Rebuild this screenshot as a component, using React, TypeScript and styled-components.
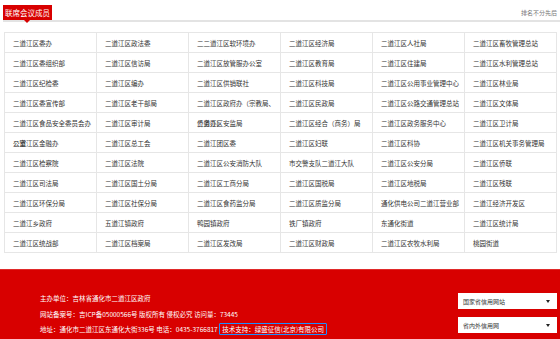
import styled, { createGlobalStyle } from 'styled-components';

const GlobalStyle = createGlobalStyle`
  html, body {
    margin: 0;
    padding: 0;
    background: #fff;
    font-family: "Noto Sans CJK SC", "Noto Sans", sans-serif;
  }
  * { box-sizing: border-box; }
`;

const RED = '#d80000';

const members: string[][] = [
	['二道江区委办', '二道江区政法委', '二二道江区软环境办', '二道江区经济局', '二道江区人社局', '二道江区畜牧管理总站'],
	['二道江区委组织部', '二道江区信访局', '二道江区放管服办公室', '二道江区教育局', '二道江区住建局', '二道江区水利管理总站'],
	['二道江区纪检委', '二道江区编办', '二道江区供销联社', '二道江区科技局', '二道江区公用事业管理中心', '二道江区林业局'],
	['二道江区委宣传部', '二道江区老干部局', '二道江区政府办（宗教局、侨务办）', '二道江区民政局', '二道江区公路交通管理总站', '二道江区文体局'],
	['二道江区食品安全委员会办公室', '二道江区审计局', '二道江区安监局', '二道江区经合（商务）局', '二道江区政务服务中心', '二道江区卫计局'],
	['二道江区金融办', '二道江区总工会', '二道江团区委', '二道江区妇联', '二道江区科协', '二道江区机关事务管理局'],
	['二道江区检察院', '二道江区法院', '二道江区公安消防大队', '市交警支队二道江大队', '二道江区公安分局', '二道江区侨联'],
	['二道江区司法局', '二道江区国土分局', '二道江区工商分局', '二道江区国税局', '二道江区地税局', '二道江区残联'],
	['二道江区环保分局', '二道江区社保分局', '二道江区食药监分局', '二道江区质监分局', '通化供电公司二道江营业部', '二道江经济开发区'],
	['二道江乡政府', '五道江镇政府', '鸭园镇政府', '铁厂镇政府', '东通化街道', '二道江区统计局'],
	['二道江区统战部', '二道江区档案局', '二道江区发改局', '二道江区财政局', '二道江区农牧水利局', '桃园街道'],
];

const Page = styled.div`
  display: flex;
  flex-direction: column;
  min-height: 339px;
`;

const Section = styled.section`
  padding: 5px 0 0 3px;
`;

const SectionHeader = styled.div`
  display: flex;
  justify-content: space-between;
  align-items: flex-start;
  height: 17px;
  border-bottom: 2px solid #e3e3e3;
`;

const Tab = styled.h2`
  position: relative;
  margin: 0;
  height: 15px;
  line-height: 15px;
  padding: 0 2px;
  background: ${RED};
  color: #fff;
  font-size: 7.5px;
  font-weight: normal;

  &::after {
    content: '';
    position: absolute;
    left: 21px;
    top: 100%;
    border-left: 3px solid transparent;
    border-right: 3px solid transparent;
    border-top: 3px solid ${RED};
  }
`;

const Note = styled.span`
  margin: 4px 3px 0 0;
  font-size: 6px;
  line-height: 8px;
  color: #777;
`;

const MemberGrid = styled.div`
  display: grid;
  grid-template-columns: repeat(6, 92px);
  margin: 10px 0 0 1px;
  width: max-content;
  border-top: 1px solid #e6e6e6;
  border-left: 1px solid #e6e6e6;
`;

const Cell = styled.div`
  height: 20px;
  line-height: 20px;
  padding: 0 4px 0 8px;
  border-right: 1px solid #e6e6e6;
  border-bottom: 1px solid #e6e6e6;
  font-size: 6.5px;
  color: #333;
`;

const Footer = styled.footer`
  flex: 1;
  margin-top: 16px;
  display: flex;
  justify-content: space-between;
  align-items: flex-start;
  padding: 21px 3px 0 40px;
  background: ${RED};
  border-top: 1px solid #e02a2a;
  color: #fff;
`;

const FooterInfo = styled.div`
  font-size: 6.5px;
  line-height: 15.5px;
`;

const Line = styled.p`
  margin: 0;
`;

const Support = styled.span`
  display: inline-block;
  line-height: 10px;
  padding: 0 2px;
  border: 1px solid #1e90ff;
  border-radius: 1px;
`;

const Links = styled.div`
  display: flex;
  flex-direction: column;
  gap: 8px;
  margin-top: 2px;
`;

const SelectBox = styled.div`
  display: flex;
  align-items: center;
  justify-content: space-between;
  width: 99px;
  height: 16px;
  padding: 0 7px 0 5px;
  background: #fff;
  color: #333;
  font-size: 6px;
`;

function Select({ label }: { label: string }) {
	return (
		<SelectBox>
			<span>{label}</span>
			<svg width="4" height="3" viewBox="0 0 4 3">
				<path d="M0 0 L4 0 L2 3 Z" fill="#222" />
			</svg>
		</SelectBox>
	);
}

export default function App() {
	return (
		<Page>
			<GlobalStyle />
			<Section>
				<SectionHeader>
					<Tab>联席会议成员</Tab>
					<Note>排名不分先后</Note>
				</SectionHeader>
				<MemberGrid>
					{members.flat().map((name, i) => (
						<Cell key={i}>{name}</Cell>
					))}
				</MemberGrid>
			</Section>
			<Footer>
				<FooterInfo>
					<Line>主办单位：吉林省通化市二道江区政府</Line>
					<Line>网站备案号：吉ICP备05000566号 版权所有 侵权必究 访问量：73445</Line>
					<Line>
						地址：通化市二道江区东通化大街336号 电话：0435-3766817{' '}
						<Support>技术支持：绿盛征信(北京)有限公司</Support>
					</Line>
				</FooterInfo>
				<Links>
					<Select label="国家省信用网站" />
					<Select label="省内外信用网" />
				</Links>
			</Footer>
		</Page>
	);
}
